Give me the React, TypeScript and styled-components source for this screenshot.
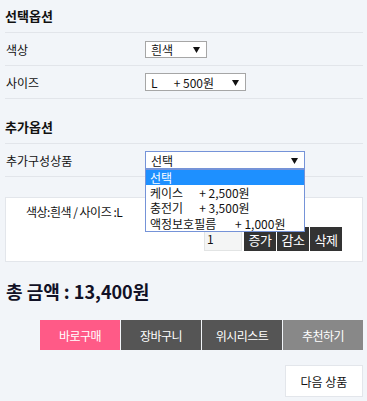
import React from "react";
import styled, { createGlobalStyle } from "styled-components";

const Global = createGlobalStyle`
  html, body { margin: 0; padding: 0; background: #f2f5f9; }
  body { font-family: "Noto Sans CJK KR", "Noto Sans", sans-serif; color: #111; }
  * { box-sizing: border-box; }
`;

const Page = styled.div`
  width: 367px;
  height: 401px;
  padding: 0 4px 0 5px;
  background: #f2f5f9;
  overflow: hidden;
`;

const Heading = styled.div<{ $top?: number }>`
  height: 33px;
  margin-top: ${(p) => p.$top ?? 0}px;
  line-height: 32px;
  font-size: 13px;
  font-weight: 700;
  border-bottom: 1px solid #e2e5ea;
`;

const Row = styled.div`
  height: 33px;
  display: flex;
  align-items: center;
  border-bottom: 1px solid #e2e5ea;
  font-size: 12px;
`;

const Label = styled.div`
  width: 140px;
  padding-left: 1px;
`;

const SelectWrap = styled.div`
  position: relative;
  z-index: 5;
`;

const Select = styled.div<{ $w: number; $h?: number; $focus?: boolean }>`
  width: ${(p) => p.$w}px;
  height: ${(p) => p.$h ?? 17}px;
  background: #fff;
  border: 1px solid ${(p) => (p.$focus ? "#7593d8" : "#a6a6a6")};
  display: flex;
  align-items: center;
  justify-content: space-between;
  padding: 0 6px 0 5px;
  font-size: 12px;
  white-space: pre;
`;

const Arrow = () => (
  <svg width="7" height="7" viewBox="0 0 7 7">
    <polygon points="0,1 7,1 3.5,7" fill="#111" />
  </svg>
);

const DropList = styled.div`
  position: absolute;
  left: 0;
  top: 18px;
  width: 160px;
  background: #fff;
  border: 1px solid #7593d8;
  font-size: 12px;
`;

const DropItem = styled.div<{ $active?: boolean }>`
  height: ${(p) => (p.$active ? 15 : 15.3)}px;
  line-height: 15px;
  padding-left: 4px;
  white-space: pre;
  background: ${(p) => (p.$active ? "#1e90ff" : "#fff")};
  color: ${(p) => (p.$active ? "#fff" : "#111")};
`;

const Box = styled.div`
  margin-top: 20px;
  height: 65px;
  background: #fff;
  border: 1px solid #e3e6eb;
  padding: 5px 20px 0 20px;
`;

const BoxText = styled.div`
  font-size: 12px;
  line-height: 18px;
  letter-spacing: -0.5px;
  white-space: pre;
`;

const QtyRow = styled.div`
  display: flex;
  justify-content: flex-end;
  gap: 1px;
  margin-top: 6px;
`;

const Qty = styled.div`
  width: 38px;
  height: 24px;
  background: #f4f5f5;
  border: 1px solid #e2e4e4;
  font-size: 12px;
  padding: 2px 0 0 2px;
  margin-right: 1px;
`;

const QtyBtn = styled.div`
  width: 32px;
  height: 24px;
  background: #333;
  color: #fff;
  font-size: 13px;
  display: flex;
  align-items: center;
  justify-content: center;
  letter-spacing: -0.5px;
`;

const Total = styled.div`
  margin-top: 14px;
  height: 30px;
  line-height: 30px;
  font-size: 18px;
  font-weight: 700;
  color: #111126;
  padding-left: 1px;
`;

const Actions = styled.div`
  margin-top: 14px;
  display: flex;
  justify-content: flex-end;
  gap: 1px;
`;

const ActionBtn = styled.div<{ $bg: string; $w?: number }>`
  width: ${(p) => p.$w ?? 80}px;
  height: 30px;
  background: ${(p) => p.$bg};
  color: #fff;
  font-size: 12px;
  letter-spacing: -0.5px;
  display: flex;
  align-items: center;
  justify-content: center;
`;

const NextRow = styled.div`
  margin-top: 15px;
  display: flex;
  justify-content: flex-end;
`;

const NextBtn = styled.div`
  width: 78px;
  height: 32px;
  background: #fff;
  border: 1px solid #e3e6eb;
  font-size: 12px;
  display: flex;
  align-items: center;
  justify-content: center;
`;

export default function App() {
  return (
    <>
      <Global />
      <Page>
        <Heading>선택옵션</Heading>
        <Row>
          <Label>색상</Label>
          <Select $w={62} $h={17}>
            <span>흰색</span>
            <Arrow />
          </Select>
        </Row>
        <Row>
          <Label>사이즈</Label>
          <Select $w={101} $h={18}>
            <span>{"L      + 500원"}</span>
            <Arrow />
          </Select>
        </Row>
        <Heading $top={12}>추가옵션</Heading>
        <Row>
          <Label>추가구성상품</Label>
          <SelectWrap>
            <Select $w={160} $h={18} $focus>
              <span>선택</span>
              <Arrow />
            </Select>
            <DropList>
              <DropItem $active>선택</DropItem>
              <DropItem>{"케이스      + 2,500원"}</DropItem>
              <DropItem>{"충전기      + 3,500원"}</DropItem>
              <DropItem>{"액정보호필름       + 1,000원"}</DropItem>
            </DropList>
          </SelectWrap>
        </Row>
        <Box>
          <BoxText>{"색상:흰색 / 사이즈 :L"}</BoxText>
          <QtyRow>
            <Qty>1</Qty>
            <QtyBtn>증가</QtyBtn>
            <QtyBtn>감소</QtyBtn>
            <QtyBtn>삭제</QtyBtn>
          </QtyRow>
        </Box>
        <Total>총 금액 : 13,400원</Total>
        <Actions>
          <ActionBtn $bg="#ff5a87">바로구매</ActionBtn>
          <ActionBtn $bg="#555555">장바구니</ActionBtn>
          <ActionBtn $bg="#555555">위시리스트</ActionBtn>
          <ActionBtn $bg="#888888">추천하기</ActionBtn>
        </Actions>
        <NextRow>
          <NextBtn>다음 상품</NextBtn>
        </NextRow>
      </Page>
    </>
  );
}
